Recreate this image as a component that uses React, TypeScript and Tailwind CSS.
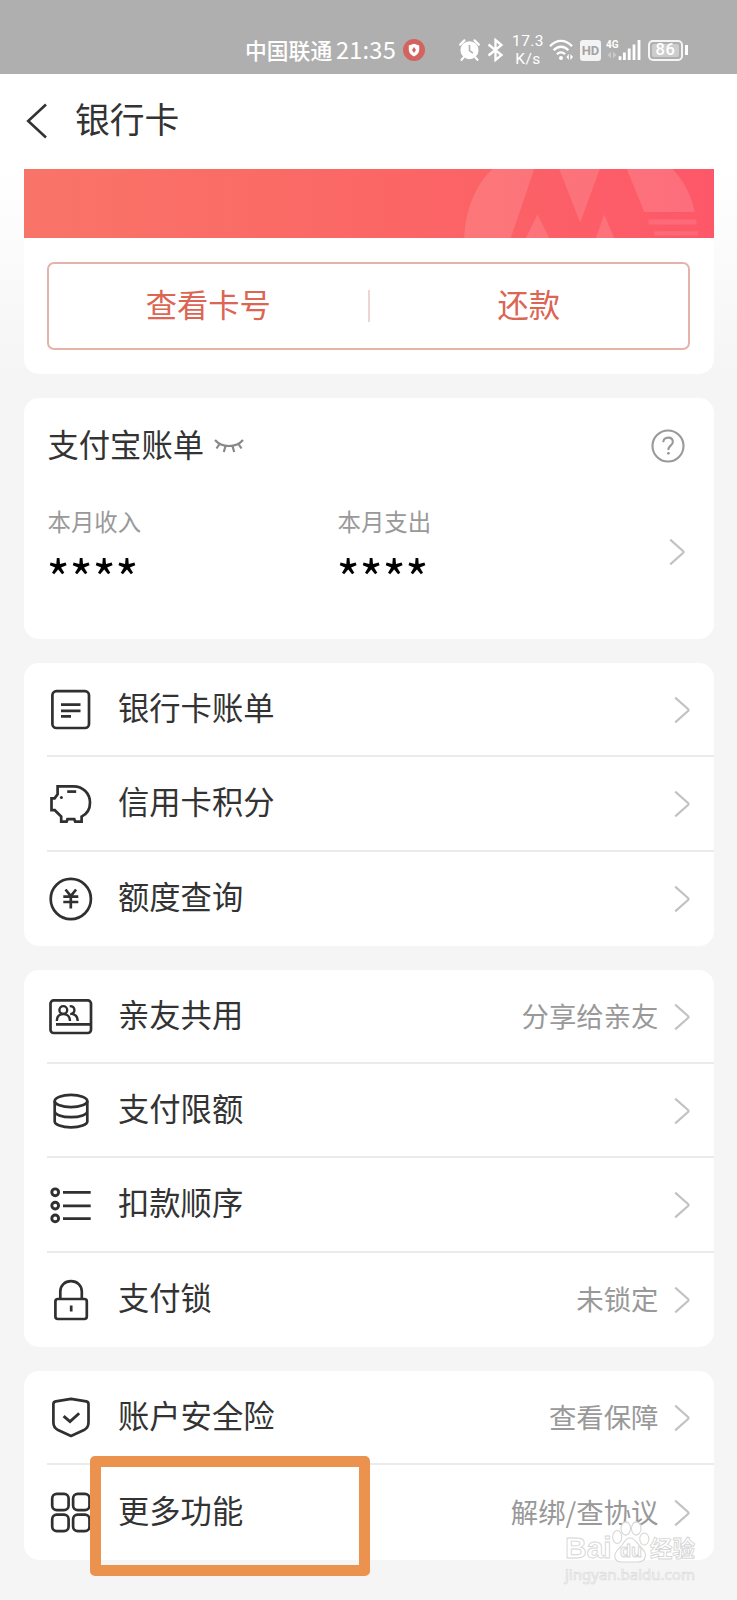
import type {ReactNode} from 'react';
import clsx from 'clsx';

type RowItem = {
  label: string;
  value?: string;
  icon: ReactNode;
};

const billRows: RowItem[] = [
  {label: '银行卡账单', icon: <BillIcon />},
  {label: '信用卡积分', icon: <PiggyIcon />},
  {label: '额度查询', icon: <YuanIcon />},
];

const payRows: RowItem[] = [
  {label: '亲友共用', value: '分享给亲友', icon: <SharedCardIcon />},
  {label: '支付限额', icon: <CoinsIcon />},
  {label: '扣款顺序', icon: <OrderIcon />},
  {label: '支付锁', value: '未锁定', icon: <LockIcon />},
];

const moreRows: RowItem[] = [
  {label: '账户安全险', value: '查看保障', icon: <ShieldIcon />},
  {label: '更多功能', value: '解绑/查协议', icon: <GridIcon />},
];

// All row icons share a 44px box and the same stroke.
function IconBox({children}: {children: ReactNode}) {
  return (
    <svg
      className="h-[44px] w-[44px] shrink-0"
      viewBox="0 0 44 44"
      fill="none"
      stroke="#303030"
      strokeWidth="2.7"
    >
      {children}
    </svg>
  );
}

function BillIcon() {
  return (
    <IconBox>
      <rect x="3.4" y="3.2" width="36.6" height="36.8" rx="4" />
      <path d="M12 16.7h19.5M12 22.8h19.5M12 28.4h10" />
    </IconBox>
  );
}

function PiggyIcon() {
  return (
    <IconBox>
      <path d="M8.6 4.3H24.5C34 4.3 41 11.5 41 20.8C41 27.5 37.5 32.3 32.6 34.6V39.6H26.2L25.3 37.2H18.5L17.6 39.6H12.2V34.5L5.8 28.2H2.5V16.4H5.6L8.6 12.2Z" />
      <path d="M18.2 9.6h9" />
      <circle cx="12.4" cy="15.4" r="1.5" fill="#303030" stroke="none" />
    </IconBox>
  );
}

function YuanIcon() {
  return (
    <IconBox>
      <circle cx="21.8" cy="22" r="20.1" />
      <path d="M16.5 12.5l5.3 6.6l5.3-6.6M14.3 19.6h15M14.3 25h15M21.8 19v12.6" />
    </IconBox>
  );
}

function SharedCardIcon() {
  return (
    <IconBox>
      <rect x="1.5" y="5.4" width="40.5" height="32.6" rx="3.2" />
      <path d="M7 29.4h35" />
      <circle cx="14.3" cy="15" r="3.9" strokeWidth="2.4" />
      <path
        d="M7.8 26c0-4.4 2.6-7 6.5-7s6.7 2.6 6.7 7M20.7 11.1c2.8 0 4.7 1.6 4.7 4s-1.6 3.9-4.2 4M23 18.9c3.5.6 5.7 3.2 5.7 7.1"
        strokeWidth="2.4"
      />
    </IconBox>
  );
}

function CoinsIcon() {
  return (
    <IconBox>
      <ellipse cx="22" cy="12" rx="16.3" ry="6.1" />
      <path d="M5.7 12v20.5c0 3 7 5.8 16.3 5.8s16.3-2.8 16.3-5.8V12M5.7 22.2c0 3.2 7 6 16.3 6s16.3-2.8 16.3-6" />
    </IconBox>
  );
}

function OrderIcon() {
  return (
    <IconBox>
      <circle cx="6.2" cy="9.3" r="3.4" strokeWidth="2.9" />
      <circle cx="6.2" cy="22.6" r="3.4" strokeWidth="2.9" />
      <circle cx="6.2" cy="35.4" r="3.4" strokeWidth="2.9" />
      <path d="M14 9.3h27.7M14 22.8h27.7M14 35.6h27.7" />
    </IconBox>
  );
}

function LockIcon() {
  return (
    <IconBox>
      <rect x="6.4" y="21" width="31.4" height="20" rx="2.4" />
      <path d="M11.3 21V13.5C11.3 7.6 15.8 3.2 22 3.2s10.800 4.400 10.800 10.300V21M22.200 27.600v6" />
    </IconBox>
  );
}

function ShieldIcon() {
  return (
    <IconBox>
      <path
        d="M22 2.8L6.8 5.4C5.2 5.7 4.4 6.4 4.4 8V26.5C4.4 30.5 6 32.4 9 34L22 40L35 34C38 32.4 39.5 30.5 39.5 26.5V8C39.5 6.4 38.8 5.7 37.2 5.4Z"
        strokeLinejoin="round"
      />
      <path d="M14.6 20.2l6.4 5.4l9.2-8.4" strokeWidth="2.9" />
    </IconBox>
  );
}

function GridIcon() {
  return (
    <IconBox>
      <rect x="3.2" y="2.8" width="16.4" height="16.4" rx="4.6" />
      <rect x="24.1" y="2.8" width="16.4" height="16.4" rx="4.6" />
      <rect x="3.2" y="23.7" width="16.4" height="16.4" rx="4.6" />
      <rect x="24.1" y="23.7" width="16.4" height="16.4" rx="4.6" />
    </IconBox>
  );
}

function Chevron() {
  return (
    <svg className="h-[28px] w-[16px] shrink-0" viewBox="0 0 16 28" fill="none">
      <path
        d="M1.2 1.6L14 13Q15 14 14 15L1.2 26.4"
        stroke="#c2c2c2"
        strokeWidth="2.2"
      />
    </svg>
  );
}

function StatusBar() {
  return (
    <div className="flex h-[73.5px] items-center bg-[#afafaf] pl-[245px] pt-[27px] text-white">
      <span className="w-[91px] text-[21.8px] font-medium leading-none">中国联通</span>
      <span className="w-[67px] text-[23.6px] leading-none tracking-[0.2px]">21:35</span>
      <svg className="h-[22px] w-[22px]" viewBox="0 0 22 22">
        <circle cx="11" cy="11" r="11" fill="#d4635f" />
        <path d="M11 4.8l5.2 1.8v4.2c0 3.2-2.2 5.4-5.2 6.6c-3-1.2-5.2-3.4-5.2-6.6V6.6Z" fill="#fff" />
        <path d="M11 8l2 3l-2 3l-2-3Z" fill="#d4635f" />
      </svg>
      <svg className="ml-[34px] h-[22px] w-[21px]" viewBox="0 0 21 22" fill="none">
        <circle cx="10.5" cy="11.2" r="9" fill="#fff" />
        <path d="M1.2 5.6L5.4 1.4M19.8 5.6L15.6 1.4M4.6 18.4l-2 2.4M16.4 18.4l2 2.4" stroke="#fff" strokeWidth="2.2" strokeLinecap="round" />
        <path d="M10.5 6v5.6l3.4 2.6" stroke="#afafaf" strokeWidth="1.6" />
      </svg>
      <svg className="ml-[7px] h-[24px] w-[17px]" viewBox="0 0 17 24" fill="none">
        <path d="M1.5 6.5L14.5 17L8.5 22V2L14.5 7L1.5 17.5" stroke="#fff" strokeWidth="2.3" />
      </svg>
      <div className="ml-[7px] flex w-[34px] flex-col items-center gap-[3px] font-[Roboto,sans-serif] text-[15.5px] leading-[15px] tracking-[0.4px]">
        <span>17.3</span>
        <span>K/s</span>
      </div>
      <svg className="ml-[4px] h-[22px] w-[25px]" viewBox="0 0 25 22" fill="none">
        <path d="M1 7.2C7.5 0 16.5 0 23 7.2M4.6 11.2c4.4-4.6 10.4-4.6 14.8 0M8 15.2c2.4-2.4 5.6-2.4 8 0" stroke="#fff" strokeWidth="2.3" />
        <circle cx="12" cy="19" r="2" fill="#fff" />
        <path d="M19.8 15v6l-2.4-3ZM21.4 15v6l2.6-3Z" fill="#fff" />
      </svg>
      <span className="ml-[6px] flex h-[21px] w-[21px] items-center justify-center rounded-[3px] bg-[#f3f3f3] font-[Roboto,sans-serif] text-[13px] font-bold leading-none text-[#a3a3a3]">
        HD
      </span>
      <div className="ml-[5px] flex h-[22px] w-[13px] flex-col">
        <span className="font-[Roboto,sans-serif] text-[10px] font-bold leading-[12px]">4G</span>
        <svg className="ml-[1px] h-[8px] w-[10px]" viewBox="0 0 10 8">
          <path d="M4 0.5v7L0.5 4ZM6 0.5v7L9.5 4Z" fill="#c9c9c9" />
        </svg>
      </div>
      <svg className="-ml-[1px] h-[22px] w-[24px]" viewBox="0 0 24 22">
        <path d="M2 17.2v3.8M6.4 13.4V21M11.2 9.4V21M16 5.6V21M21 1V21" stroke="#fff" strokeWidth="2.8" />
      </svg>
      <span className="ml-[6px] flex h-[21px] w-[35px] rounded-[5px] border-2 border-[#f5f5f5] p-[2px]">
        <span className="flex flex-1 items-center justify-center rounded-[2px] bg-[#cdcdcd] font-[Roboto,sans-serif] text-[16.5px] font-medium leading-none tracking-[0.5px]">
          86
        </span>
      </span>
      <span className="ml-[1.5px] h-[10px] w-[3px] bg-white" />
    </div>
  );
}

function BankBanner() {
  return (
    <div className="h-[69px] bg-linear-to-r from-[#f97468] via-[#fb6765] to-[#fd5869]">
      <svg className="h-full w-full" viewBox="23.5 168.5 690 69" fill="#fff" fillOpacity="0.13">
        <path d="M492 168.5C475 184 464.5 210 463.7 237.5H510.3L533.7 168.5Z" />
        <path d="M525.3 237.5L537 214L548.7 237.5Z" />
        <path d="M558.7 168.5L579.7 222L599.3 168.5Z" />
        <path d="M595.3 237.5L603.7 214L613.7 237.5Z" />
        <path d="M626.3 168.5L643.7 211.5H694.3C691 195 683 180 672 168.5Z" />
        <path d="M648 219h48v5h-48ZM653.7 230.7h44v4.3h-44Z" fillOpacity="0.1" />
      </svg>
    </div>
  );
}

function RowCard({rows}: {rows: RowItem[]}) {
  return (
    <section className="rounded-[15px] bg-white pl-[23.5px]">
      {rows.map((row, i) => (
        <div
          key={row.label}
          className={clsx(
            'flex h-[94.3px] items-center pl-[2px] pr-[24px]',
            i < rows.length - 1 && 'border-b-2 border-[#ebebeb] pt-[1px]',
          )}
        >
          {row.icon}
          <span className="-mt-[6px] ml-[25px] text-[31.3px] leading-[44px] text-[#333]">{row.label}</span>
          <span className="-mt-[4px] ml-auto mr-[15px] text-[27.4px] leading-[40px] text-[#999]">{row.value}</span>
          <Chevron />
        </div>
      ))}
    </section>
  );
}

function Watermark() {
  return (
    <div className="absolute left-[565px] top-[1521px] flex w-[132px] flex-col text-white">
      <div className="flex h-[42px] items-end">
        <span className="w-[47px] font-['Liberation_Sans',sans-serif] text-[30px] font-bold leading-[31px] [-webkit-text-stroke:0.9px_#d6d6d6]">
          Bai
        </span>
        <svg className="h-[42px] w-[38px]" viewBox="0 0 40 42" preserveAspectRatio="none" fill="#fff" stroke="#d6d6d6" strokeWidth="1.1">
          <ellipse cx="5.5" cy="16" rx="4.8" ry="6.5" />
          <ellipse cx="14.5" cy="7.5" rx="5" ry="6.6" />
          <ellipse cx="25.5" cy="7.5" rx="5" ry="6.6" />
          <ellipse cx="34" cy="18" rx="4.8" ry="6" />
          <path d="M19 17c5 0 7 5 11 9s6 6 5 10s-5 5-8 5H10c-4 0-7-2-7-6s3-6 6-9s5-9 10-9Z" />
          <text x="8.5" y="36.5" fontSize="19" fontWeight="700" fontFamily="Liberation Sans" strokeWidth="1">
            du
          </text>
        </svg>
        <span className="text-[22.5px] font-bold leading-[32px] [-webkit-text-stroke:0.9px_#d6d6d6]">经验</span>
      </div>
      <span className="mt-[2px] font-['Noto_Sans',sans-serif] text-[15px] leading-[18px] [-webkit-text-stroke:0.7px_#dadada]">
        jingyan.baidu.com
      </span>
    </div>
  );
}

export default function App() {
  return (
    <div className="relative h-[1600px] w-[737px] overflow-hidden bg-[#f5f5f5] font-['Noto_Sans_CJK_SC',sans-serif]">
      <StatusBar />
      <header className="flex h-[95px] items-center bg-white pl-[26px]">
        <svg className="h-[36px] w-[22px]" viewBox="0 0 22 36" fill="none">
          <path d="M20 1.5L2.2 18L20 34.5" stroke="#333" strokeWidth="2.6" />
        </svg>
        <h1 className="-mt-[6px] ml-[27px] text-[34.8px] leading-[48px] text-[#333]">银行卡</h1>
      </header>

      <div className="bg-linear-to-b from-white to-[#f5f5f5] px-[23.5px]">
        <section className="rounded-b-[15px] bg-white pb-[24px]">
          <BankBanner />
          <div className="mx-[23.5px] mt-[24px] flex h-[88px] items-center rounded-[7px] border-2 border-[#e6b3ab] text-[31.3px] text-[#dc6553]">
            <button className="flex-1 pb-[3px]">查看卡号</button>
            <span className="h-[32px] w-[2px] bg-[#f0d3d3]" />
            <button className="flex-1 pb-[3px]">还款</button>
          </div>
        </section>
      </div>

      <main className="flex flex-col gap-[24px] px-[23.5px] pt-[24px]">
        <section className="h-[241.5px] rounded-[15px] bg-white pl-[24px] pr-[29px] pt-[27px]">
          <div className="flex items-center">
            <h2 className="-mt-[4px] text-[31.3px] leading-[46px] text-[#333]">支付宝账单</h2>
            <svg className="ml-[10px] h-[16px] w-[30px]" viewBox="0 0 30 16" fill="none" stroke="#888" strokeWidth="2.2">
              <path d="M1 2C8 10 22 10 29 2M5.5 6l-3 4.5M11.5 8l-1.7 6M18.5 8l1.7 6M24.5 6l3 4.5" />
            </svg>
            <svg className="ml-auto h-[34px] w-[34px]" viewBox="0 0 34 34" fill="none">
              <circle cx="17" cy="17" r="15.5" stroke="#999" strokeWidth="2.1" />
              <path d="M12.3 13.2c0-2.8 2-4.6 4.8-4.6s4.7 1.7 4.7 4.3c0 3.6-4.4 3.8-4.4 7.4v.7" stroke="#999" strokeWidth="2.1" />
              <circle cx="17.4" cy="24.3" r="1.4" fill="#999" />
            </svg>
          </div>
          <div className="mt-[37px] flex items-center">
            <div className="w-[290px]">
              <p className="text-[23.4px] leading-[34px] text-[#999]">本月收入</p>
              <p className="-ml-[1px] mt-[4px] h-[40px] text-[50px] leading-[69px] tracking-[-0.4px] text-black">****</p>
            </div>
            <div>
              <p className="text-[23.4px] leading-[34px] text-[#999]">本月支出</p>
              <p className="-ml-[1px] mt-[4px] h-[40px] text-[50px] leading-[69px] tracking-[-0.4px] text-black">****</p>
            </div>
            <span className="ml-auto pt-[18px]">
              <Chevron />
            </span>
          </div>
        </section>

        <RowCard rows={billRows} />
        <RowCard rows={payRows} />
        <RowCard rows={moreRows} />
      </main>

      {/* highlight around the "more" row */}
      <div className="absolute left-[90px] top-[1456px] h-[120px] w-[280px] rounded-[5px] border-[11.5px] border-[#eb924e]" />
      <Watermark />
    </div>
  );
}
